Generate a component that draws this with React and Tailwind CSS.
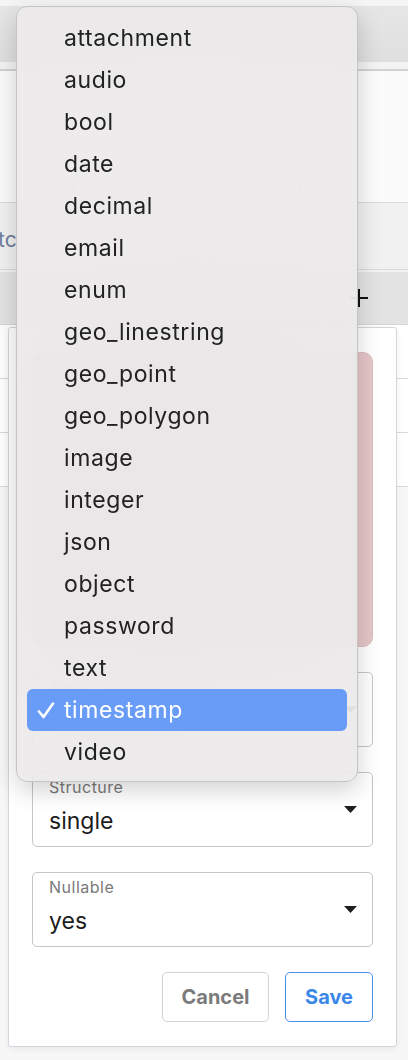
import React from "react";

const items = [
  "attachment","audio","bool","date","decimal","email","enum","geo_linestring","geo_point","geo_polygon","image","integer","json","object","password","text","timestamp","video",
];

function Caret() {
  return (
    <svg width="13" height="7" viewBox="0 0 13 7" className="shrink-0">
      <path d="M0 0 H13 L6.5 7 Z" fill="#1f1f1f" />
    </svg>
  );
}

function SelectField({ label, value }) {
  return (
    <div className="h-[75px] rounded-[5px] border border-[#c6c6c6] bg-white flex items-center pl-[16px] pr-[15px]">
      <div className="flex-1 self-stretch flex flex-col pt-[5px]">
        <span className="text-[16px] leading-[18px] text-[#7a7a7a] tracking-[0.5px]">{label}</span>
        <span className="text-[23px] leading-[30px] mt-[10px] text-[#1d1d1d]">{value}</span>
      </div>
      <Caret />
    </div>
  );
}

export default function App() {
  return (
    <div
      className="relative w-[408px] h-[1060px] overflow-hidden bg-[#f7f7f7]"
      style={{ fontFamily: "Inter, 'Noto Sans', sans-serif" }}
    >
      {/* background page */}
      <div className="h-[6px] bg-[#f5f5f5]" />
      <div className="h-[56px] bg-gradient-to-b from-[#e6e6e6] to-[#dfdfdf]" />
      <div className="h-[7px] bg-[#f3f3f3]" />
      <div className="h-[2px] bg-[#d2d2d2]" />
      <div className="h-[131px] bg-[#fbfbfb]" />
      <div className="h-[68px] bg-[#f1f1f2] border-t border-b border-[#dadada] flex items-center pt-[8px]">
        <span className="text-[21px] text-[#6f7e9c] ml-[-2px]">tc</span>
      </div>
      <div className="h-[2px] bg-[#f3f3f3]" />
      <div className="h-[53px] bg-[#e3e3e3] border-b border-[#d6d6d6] flex items-center justify-end pr-[40px]">
        <svg width="18" height="18" viewBox="0 0 18 18">
          <path d="M9 0 V18 M0 9 H18" stroke="#111" strokeWidth="2" />
        </svg>
      </div>
      <div className="h-[54px] bg-white border-b border-[#d9d9d9]" />
      <div className="h-[54px] bg-white border-b border-[#d9d9d9]" />
      <div className="h-[54px] bg-white border-b border-[#d9d9d9]" />

      {/* dialog card */}
      <div className="absolute left-[8px] top-[327px] w-[389px] h-[720px] bg-white border border-[#d3d6dd] rounded-[3px] shadow-[0_2px_6px_rgba(0,0,0,0.06)] px-[23px] pt-[24px] flex flex-col gap-[25px]">
        <div className="h-[295px] rounded-[10px] bg-[#e6c6c9] border border-[#dcbcbf]" />
        <SelectField label="Type" value="timestamp" />
        <SelectField label="Structure" value="single" />
        <SelectField label="Nullable" value="yes" />
        <div className="flex justify-end gap-[16px]">
          <button className="h-[50px] w-[107px] rounded-[5px] border border-[#d3d3d3] bg-white text-[20px] font-bold text-[#7b7b7b]">
            Cancel
          </button>
          <button className="h-[50px] w-[88px] rounded-[5px] border border-[#4a8fe8] bg-white text-[20px] font-bold text-[#3a87ea]">
            Save
          </button>
        </div>
      </div>

      {/* native select popup menu */}
      <div className="absolute left-[16px] top-[6px] w-[342px] h-[776px] rounded-[11px] border border-[#c4c4c4] bg-[#ebe9ea]/90 backdrop-blur-3xl shadow-[0_8px_24px_rgba(0,0,0,0.18)] px-[10px] pt-[10px]">
        {items.map((it) => {
          const sel = it === "timestamp";
          return (
            <div
              key={it}
              className={
                sel
                  ? "h-[42px] rounded-[6px] bg-[#689cf6] flex items-center text-white"
                  : "h-[42px] flex items-center text-[#222222]"
              }
            >
              <div className="w-[37px] shrink-0 flex pl-[10px]">
                {sel && (
                  <svg width="18" height="17" viewBox="0 0 18 17">
                    <path d="M2 9.5 L6.5 15 L16 1.5" fill="none" stroke="#fff" strokeWidth="2.6" strokeLinecap="round" strokeLinejoin="round" />
                  </svg>
                )}
              </div>
              <span className="text-[23px] leading-none tracking-[0.6px]">{it}</span>
            </div>
          );
        })}
      </div>
    </div>
  );
}
